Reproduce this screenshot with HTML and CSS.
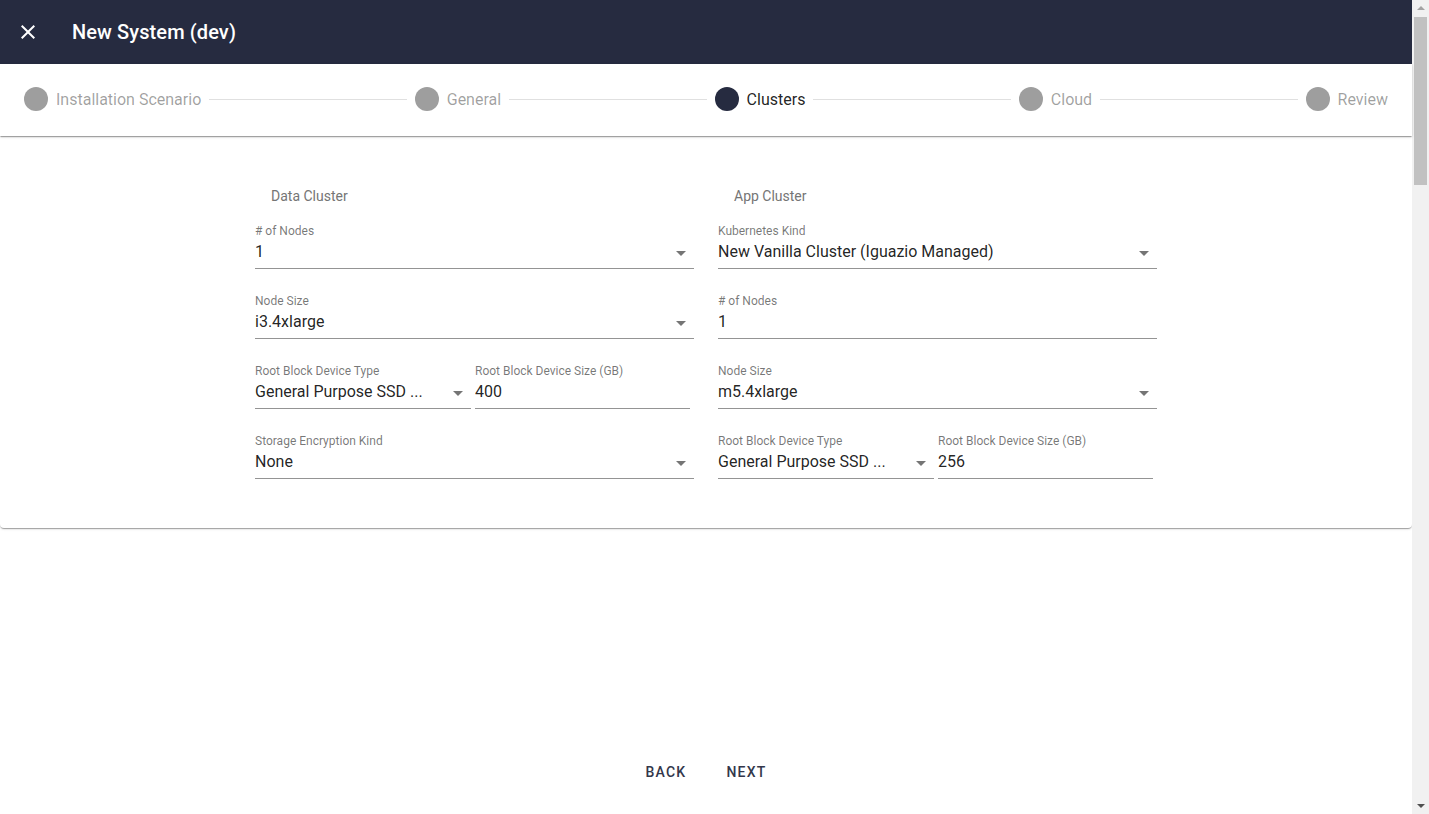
FILE: index.html
```html
<!DOCTYPE html>
<html>
<head>
<meta charset="utf-8">
<link rel="stylesheet" href="styles.css">
</head>
<body>
<div class="app">
  <header class="topbar">
    <span class="close-icon">
      <svg width="24" height="24" viewBox="0 0 24 24"><path fill="#fff" d="M19 6.41L17.59 5 12 10.590 6.41 5 5 6.41 10.59 12 5 17.59 6.41 19 12 13.41 17.59 19 19 17.59 13.41 12z"/></svg>
    </span>
    <span class="title">New System (dev)</span>
  </header>

  <nav class="stepper">
    <div class="step"><span class="dot"></span><span class="step-label">Installation Scenario</span></div>
    <span class="line"></span>
    <div class="step"><span class="dot"></span><span class="step-label">General</span></div>
    <span class="line"></span>
    <div class="step active"><span class="dot"></span><span class="step-label">Clusters</span></div>
    <span class="line"></span>
    <div class="step"><span class="dot"></span><span class="step-label">Cloud</span></div>
    <span class="line"></span>
    <div class="step"><span class="dot"></span><span class="step-label">Review</span></div>
  </nav>

  <main class="card">
    <div class="form">
      <section class="col">
        <div class="col-title">Data Cluster</div>
        <div class="field select">
          <label>#&nbsp;of Nodes</label>
          <div class="value">1</div>
        </div>
        <div class="field select">
          <label>Node Size</label>
          <div class="value">i3.4xlarge</div>
        </div>
        <div class="pair">
          <div class="field select">
            <label>Root Block Device Type</label>
            <div class="value">General Purpose SSD ...</div>
          </div>
          <div class="field">
            <label>Root Block Device Size (GB)</label>
            <div class="value">400</div>
          </div>
        </div>
        <div class="field select">
          <label>Storage Encryption Kind</label>
          <div class="value">None</div>
        </div>
      </section>
      <section class="col">
        <div class="col-title">App Cluster</div>
        <div class="field select">
          <label>Kubernetes Kind</label>
          <div class="value">New Vanilla Cluster (Iguazio Managed)</div>
        </div>
        <div class="field">
          <label>#&nbsp;of Nodes</label>
          <div class="value">1</div>
        </div>
        <div class="field select">
          <label>Node Size</label>
          <div class="value">m5.4xlarge</div>
        </div>
        <div class="pair">
          <div class="field select">
            <label>Root Block Device Type</label>
            <div class="value">General Purpose SSD ...</div>
          </div>
          <div class="field">
            <label>Root Block Device Size (GB)</label>
            <div class="value">256</div>
          </div>
        </div>
      </section>
    </div>
  </main>

  <div class="actions">
    <button class="btn">BACK</button>
    <button class="btn">NEXT</button>
  </div>
</div>
<div class="scrollbar">
  <span class="arrow up"></span>
  <div class="track"><span class="thumb"></span></div>
  <span class="arrow down"></span>
</div>
</body>
</html>
```

FILE: styles.css
```css
* { box-sizing: border-box; }
html, body { margin: 0; padding: 0; }
body {
  font-family: Roboto, "Liberation Sans", Arial, sans-serif;
  background: #fff;
  color: rgba(0,0,0,.87);
  display: flex;
  height: 100vh;
  overflow: hidden;
}
.app { width: 1412px; flex: none; }

.topbar {
  height: 64px;
  background: #262b40;
  display: flex;
  align-items: center;
  padding-left: 16px;
}
.close-icon { width: 24px; height: 24px; display: flex; }
.title {
  margin-left: 32px;
  color: #fff;
  font-size: 20px;
  font-weight: 500;
  letter-spacing: 0.1px;
}

.stepper {
  height: 72px;
  display: flex;
  align-items: center;
  padding: 0 24px 2px;
  background: #fff;
  box-shadow: 0 2px 1px -1px rgba(0,0,0,.2), 0 1px 1px 0 rgba(0,0,0,.14), 0 1px 3px 0 rgba(0,0,0,.12);
  position: relative;
  z-index: 1;
}
.step { display: flex; align-items: center; }
.dot {
  width: 24px; height: 24px; border-radius: 50%;
  background: #9e9e9e;
}
.step-label {
  margin-left: 8px;
  font-size: 16px;
  color: rgba(0,0,0,.38);
}
.step.active .dot { background: #262b40; }
.step.active .step-label { color: rgba(0,0,0,.87); }
.line {
  flex: 1;
  height: 1px;
  background: #e0e0e0;
  margin: 0 8px;
}

.card {
  background: #fff;
  border-radius: 0 0 4px 4px;
  box-shadow: 0 2px 1px -1px rgba(0,0,0,.2), 0 1px 1px 0 rgba(0,0,0,.14), 0 1px 3px 0 rgba(0,0,0,.12);
  padding: 50px 0 24px;
}
.form {
  width: 902px;
  margin: 0 auto;
  display: grid;
  grid-template-columns: 439px 439px;
  column-gap: 24px;
}
.col-title {
  padding-left: 16px;
  font-size: 14px;
  line-height: 20px;
  color: #757575;
  margin-bottom: 18px;
}
.field {
  position: relative;
  margin-bottom: 25px;
  border-bottom: 1px solid rgba(0,0,0,.42);
  padding-bottom: 4px;
}
.field label {
  display: block;
  font-size: 12px;
  line-height: 14px;
  color: rgba(0,0,0,.54);
  margin-bottom: 2px;
}
.field .value {
  font-size: 16px;
  line-height: 24px;
  color: rgba(0,0,0,.87);
  white-space: nowrap;
  overflow: hidden;
}
.field.select::after {
  content: "";
  position: absolute;
  right: 8px;
  top: 27px;
  border-left: 5px solid transparent;
  border-right: 5px solid transparent;
  border-top: 5px solid rgba(0,0,0,.54);
}
.pair {
  display: grid;
  grid-template-columns: 216px 215px;
  column-gap: 4px;
}

.actions {
  margin-top: 226px;
  display: flex;
  justify-content: center;
}
.btn {
  font-family: Roboto, "Liberation Sans", Arial, sans-serif;
  font-size: 14px;
  font-weight: 500;
  letter-spacing: 1.25px;
  color: #33374b;
  background: transparent;
  border: 0;
  height: 36px;
  min-width: 64px;
  padding: 0 16px;
  margin: 0 4px;
}

.scrollbar {
  width: 17px;
  flex: none;
  height: 100vh;
  background: #f1f1f1;
  display: flex;
  flex-direction: column;
  align-items: center;
}
.arrow {
  width: 0; height: 0;
  border-left: 4px solid transparent;
  border-right: 4px solid transparent;
}
.arrow.up { border-bottom: 4px solid #a3a3a3; margin-top: 6px; margin-bottom: 7px; }
.arrow.down { border-top: 4px solid #505050; margin-top: 7px; margin-bottom: 6px; }
.track {
  flex: 1;
  width: 100%;
  padding: 0 2px;
}
.thumb {
  display: block;
  height: 168px;
  background: #c1c1c1;
}
```
